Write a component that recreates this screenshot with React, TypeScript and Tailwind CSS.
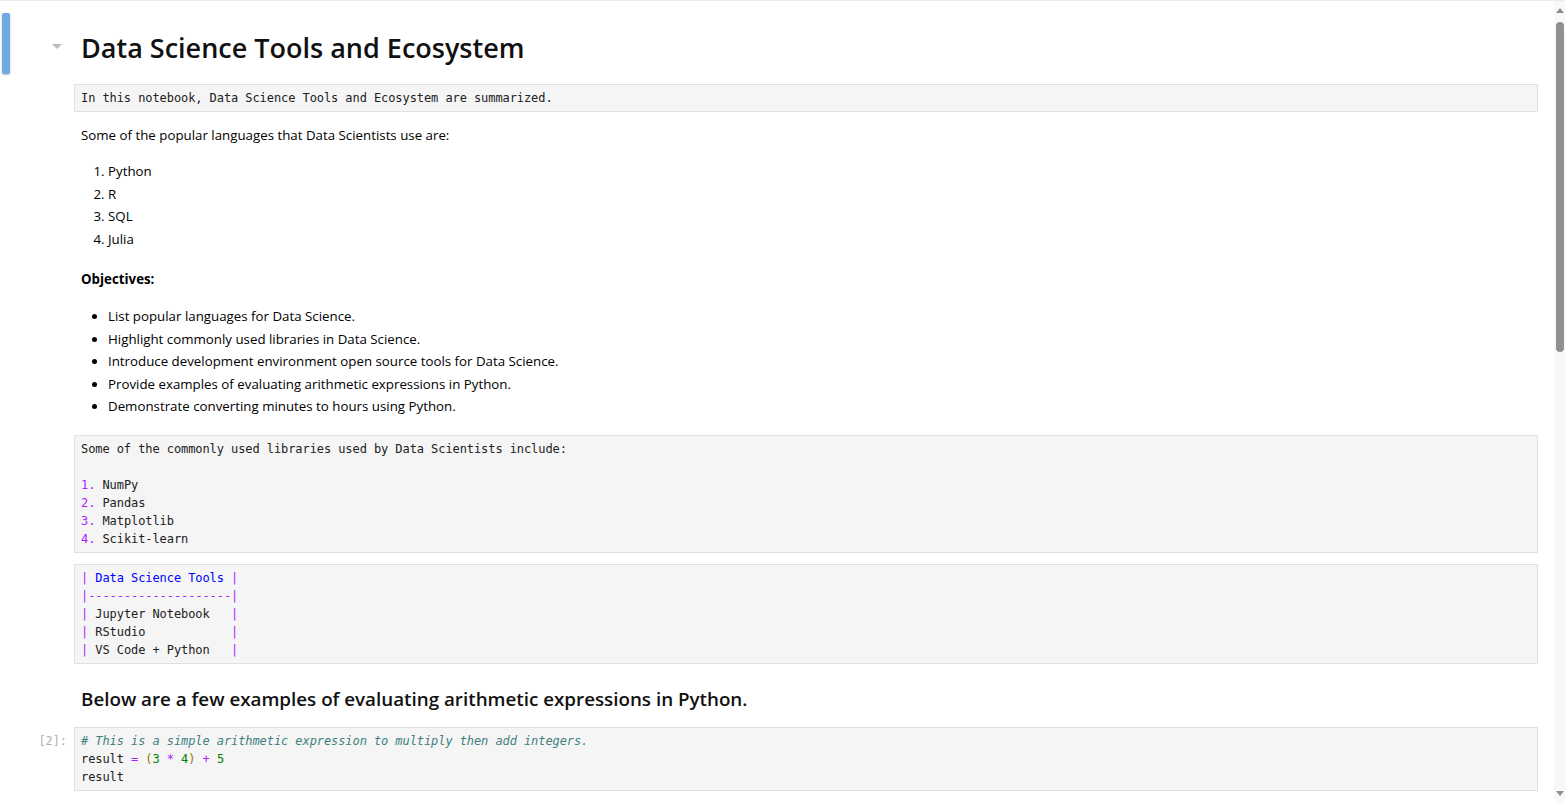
import React from "react"

const mono = "font-['DejaVu_Sans_Mono','Liberation_Mono',monospace] text-[12px] leading-[18px] tracking-[-0.08px]"
const sans = "font-['Open_Sans','Noto_Sans',sans-serif]"

function Box({ children, className = "" }: { children: React.ReactNode; className?: string }) {
    return (
        <div className={`border border-[#e0e0e0] bg-[#f5f5f5] px-[6px] py-[4px] whitespace-pre text-[#212121] ${mono} ${className}`}>
            {children}
        </div>
    )
}

function Row({ prompt, children, className = "" }: { prompt?: string; children: React.ReactNode; className?: string }) {
    return (
        <div className={`flex ${className}`}>
            <div className={`w-[74px] shrink-0 pr-[7px] text-right text-[#b0b0b0] ${mono}`}>
                {prompt ? <span className="relative top-[5px]">{prompt}</span> : null}
            </div>
            <div className="min-w-0 flex-1">{children}</div>
        </div>
    )
}

export default function App() {
    const p = "text-[#000000] text-[13.3px] leading-[22.4px]"
    const purple = "text-[#aa22ff]"

    return (
        <div className={`flex h-[803px] w-[1565px] overflow-hidden border-t border-[#ececec] bg-white ${sans}`}>
            <main className="relative flex-1 overflow-hidden pr-[16px]">
                {/* heading cell */}
                <div className="flex pt-[12px]">
                    <div className="w-[74px] shrink-0 flex">
                        <div className="ml-[2px] h-[61px] w-[8px] rounded-[2px] bg-[#70a9e6] shadow-[0_1px_2px_rgba(0,0,0,0.25)]" />
                        <div className="ml-[42px] mt-[31px] h-0 w-0 border-x-[5px] border-t-[5px] border-x-transparent border-t-[#bdbdbd]" />
                    </div>
                    <h1 className="mt-[17px] pl-[7px] text-[27px] leading-[36px] font-semibold text-[#111]">
                        Data Science Tools and Ecosystem
                    </h1>
                </div>

                <Row className="mt-[10px]">
                    <Box>In this notebook, Data Science Tools and Ecosystem are summarized.</Box>
                </Row>

                <Row className="mt-[12px]">
                    <div className="pl-[7px]">
                        <p className={p}>Some of the popular languages that Data Scientists use are:</p>
                        <ol className={`mt-[14px] list-decimal pl-[27px] ${p}`}>
                            <li>Python</li>
                            <li>R</li>
                            <li>SQL</li>
                            <li>Julia</li>
                        </ol>
                    </div>
                </Row>

                <Row className="mt-[18px]">
                    <div className="pl-[7px]">
                        <p className={`${p} font-bold`}>Objectives:</p>
                        <ul className={`mt-[15px] list-disc pl-[27px] ${p}`}>
                            <li>List popular languages for Data Science.</li>
                            <li>Highlight commonly used libraries in Data Science.</li>
                            <li>Introduce development environment open source tools for Data Science.</li>
                            <li>Provide examples of evaluating arithmetic expressions in Python.</li>
                            <li>Demonstrate converting minutes to hours using Python.</li>
                        </ul>
                    </div>
                </Row>

                <Row className="mt-[18px]">
                    <Box>
                        {"Some of the commonly used libraries used by Data Scientists include:\n\n"}
                        <span className={purple}>1.</span>{" NumPy\n"}
                        <span className={purple}>2.</span>{" Pandas\n"}
                        <span className={purple}>3.</span>{" Matplotlib\n"}
                        <span className={purple}>4.</span>{" Scikit-learn"}
                    </Box>
                </Row>

                <Row className="mt-[11px]">
                    <Box>
                        <span className={purple}>|</span>
                        <span className="text-[#0000ff]"> Data Science Tools </span>
                        <span className={purple}>|</span>
                        {"\n"}
                        <span className={purple}>|--------------------|</span>
                        {"\n"}
                        <span className={purple}>|</span>{" Jupyter Notebook   "}<span className={purple}>|</span>{"\n"}
                        <span className={purple}>|</span>{" RStudio            "}<span className={purple}>|</span>{"\n"}
                        <span className={purple}>|</span>{" VS Code + Python   "}<span className={purple}>|</span>
                    </Box>
                </Row>

                <Row className="mt-[23px]">
                    <h2 className="pl-[7px] text-[18.8px] leading-[24px] font-semibold text-[#111]">
                        Below are a few examples of evaluating arithmetic expressions in Python.
                    </h2>
                </Row>

                <Row className="mt-[16px]" prompt="[2]:">
                    <Box>
                        <span className="italic text-[#408080]"># This is a simple arithmetic expression to multiply then add integers.</span>
                        {"\nresult "}
                        <span className={purple}>=</span>
                        {" "}
                        <span className="text-[#997700]">(</span>
                        <span className="text-[#008000]">3</span>
                        {" "}
                        <span className={purple}>*</span>
                        {" "}
                        <span className="text-[#008000]">4</span>
                        <span className="text-[#997700]">)</span>
                        {" "}
                        <span className={purple}>+</span>
                        {" "}
                        <span className="text-[#008000]">5</span>
                        {"\nresult"}
                    </Box>
                </Row>
            </main>

            {/* scrollbar */}
            <div className="flex w-[11px] shrink-0 flex-col items-center bg-[#f8f8f8]">
                <div className="mt-[7px] h-0 w-0 border-x-[4px] border-b-[5px] border-x-transparent border-b-[#8f8f8f]" />
                <div className="mt-[9px] h-[330px] w-[8px] rounded-[4px] bg-[#909090]" />
                <div className="flex-1" />
                <div className="mb-[7px] h-0 w-0 border-x-[4px] border-t-[5px] border-x-transparent border-t-[#8f8f8f]" />
            </div>
        </div>
    )
}
